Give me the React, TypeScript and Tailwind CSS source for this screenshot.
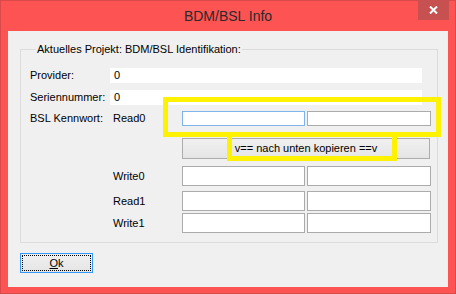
import React from "react";

const FONT = { fontFamily: '"Liberation Sans", Arial, sans-serif' };

function Field({ className = "" }: { className?: string }) {
  return <div className={`bg-white border border-[#ababab] ${className}`} />;
}

function PwRow({
  label,
  lead,
  first,
  h,
  className = "",
}: {
  label?: string;
  lead?: string;
  first?: string;
  h: string;
  className?: string;
}) {
  return (
    <div className={`flex items-center ${className}`}>
      <div className="w-[83px] shrink-0">{label}</div>
      <div className="w-[69px] shrink-0">{lead}</div>
      <div className={`flex gap-[2px] ${h}`}>
        <div className={`w-[123px] bg-white border ${first ?? "border-[#ababab]"}`} />
        <Field className="w-[124px]" />
      </div>
    </div>
  );
}

export default function App() {
  return (
    <div
      className="relative w-[456px] h-[294px] bg-[#fe5353] border border-[#d94a4a] flex flex-col text-[11px] leading-[13px] text-black"
      style={FONT}
    >
      {/* title bar */}
      <div className="h-[30px] flex items-center justify-center pt-[1px]">
        <span className="text-[14px] text-[#2a2a2a]">BDM/BSL Info</span>
      </div>
      <div className="absolute right-[6px] top-[-1px] w-[31px] h-[20px] bg-[#c75050] flex items-center justify-center">
        <svg width="9" height="8" viewBox="0 0 9 8">
          <path d="M1 0.5 L8 7.5 M8 0.5 L1 7.5" stroke="white" strokeWidth="2" />
        </svg>
      </div>

      {/* client area */}
      <div className="mx-[7px] mb-[6px] flex-1 bg-[#f0f0f0] flex flex-col">
        <fieldset className="ml-[12px] mt-[12px] w-[418px] h-[200px] border border-[#dcdcdc] pl-[9px] pb-[12px]">
          <legend className="ml-[6px] px-[1px]">Aktuelles Projekt: BDM/BSL Identifikation:</legend>

          <div className="flex items-center mt-[12px]">
            <div className="w-[80px]">Provider:</div>
            <div className="w-[312px] h-[15px] bg-white pl-[4px] flex items-center">0</div>
          </div>
          <div className="flex items-center mt-[7px]">
            <div className="w-[80px]">Seriennummer:</div>
            <div className="w-[312px] h-[15px] bg-white pl-[4px] flex items-center">0</div>
          </div>

          <PwRow
            label="BSL Kennwort:"
            lead="Read0"
            h="h-[15px]"
            first="border-[#7eb4ea]"
            className="mt-[6px]"
          />

          <div className="flex mt-[12px]">
            <div className="w-[152px] shrink-0" />
            <button className="w-[248px] h-[21px] border border-[#acacac] bg-gradient-to-b from-[#f0f0f0] to-[#e5e5e5] flex items-center justify-center">
              v== nach unten kopieren ==v
            </button>
          </div>

          <PwRow lead="Write0" h="h-[20px]" className="mt-[7px]" />
          <PwRow lead="Read1" h="h-[20px]" className="mt-[5px]" />
          <PwRow lead="Write1" h="h-[20px]" className="mt-[2px]" />
        </fieldset>

        <button className="ml-[12px] mt-[10px] w-[73px] h-[20px] border border-[#3399ff] bg-gradient-to-b from-[#f0f0f0] to-[#e5e5e5] p-[1px]">
          <div className="w-full h-full border border-dotted border-black flex items-center justify-center">
            <span>
              <span className="underline underline-offset-[1px]">O</span>k
            </span>
          </div>
        </button>
      </div>

      {/* highlight marks */}
      <div className="absolute left-[162px] top-[96px] w-[278px] h-[40px] border-[5px] border-[#fff200]" />
      <div className="absolute left-[226px] top-[131px] w-[170px] h-[29px] border-[5px] border-[#fff200]" />
    </div>
  );
}
